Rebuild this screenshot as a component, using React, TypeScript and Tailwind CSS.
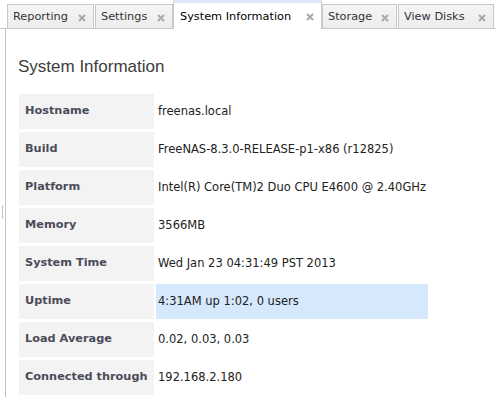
import React from 'react';

const tabs = [
  { label: 'Reporting', cls: 'w-[87px] mr-[1px]' },
  { label: 'Settings', cls: 'w-[78px]' },
  { label: 'System Information', cls: 'w-[149px]', active: true },
  { label: 'Storage', cls: 'w-[75px] mr-[1px]' },
  { label: 'View Disks', cls: 'w-[96px]' },
];

const rows: [string, string][] = [
  ['Hostname', 'freenas.local'],
  ['Build', 'FreeNAS-8.3.0-RELEASE-p1-x86 (r12825)'],
  ['Platform', 'Intel(R) Core(TM)2 Duo CPU E4600 @ 2.40GHz'],
  ['Memory', '3566MB'],
  ['System Time', 'Wed Jan 23 04:31:49 PST 2013'],
  ['Uptime', '4:31AM up 1:02, 0 users'],
  ['Load Average', '0.02, 0.03, 0.03'],
  ['Connected through', '192.168.2.180'],
];

function CloseX() {
  return (
    <svg width="8" height="8" viewBox="0 0 8 8" className="shrink-0">
      <path d="M1 1 L7 7 M7 1 L1 7" stroke="#a9a9a9" strokeWidth="2" />
    </svg>
  );
}

export default function App() {
  return (
    <div className="w-[496px] h-[397px] bg-white overflow-hidden relative font-['DejaVu_Sans',sans-serif]">
      {/* splitter grip */}
      <div className="absolute left-[2px] top-[205px] w-px h-[14px] bg-[#c8c8c8]" />

      {/* Tab strip */}
      <div className="flex items-end h-[29px] pl-[7px] border-b border-[#c9c9c9]">
        {tabs.map((t) =>
          t.active ? (
            <div
              key={t.label}
              className={`${t.cls} h-[29px] -mb-px bg-white border-x border-[#c9c9c9] border-t-[3px] border-t-[#dbe9f8] flex items-center justify-between pl-[6px] pr-[7px] pt-[2px] text-[11.3px] text-black`}
            >
              <span>{t.label}</span>
              <CloseX />
            </div>
          ) : (
            <div
              key={t.label}
              className={`${t.cls} h-[24px] bg-gradient-to-b from-[#f5f5f5] to-[#ececec] border border-b-0 border-[#c9c9c9] flex items-center justify-between pl-[5px] pr-[7px] pt-[2px] text-[11.3px] text-[#333]`}
            >
              <span>{t.label}</span>
              <CloseX />
            </div>
          )
        )}
      </div>

      {/* Content pane */}
      <div className="ml-[5px] border-l border-[#c3c3c3] h-full pl-[12px] pt-[28px]">
        <h2 className="font-['Liberation_Sans',Arial,sans-serif] text-[17px] text-[#3d3d3d] leading-[20px]">
          System Information
        </h2>
        <table className="mt-[14px] border-separate border-spacing-y-[3px] border-spacing-x-[2px] -ml-[1px]">
          <tbody>
            {rows.map(([k, v]) => (
              <tr key={k} className="h-[35px]">
                <td className="w-[135px] bg-[#f3f3f3] pl-[6px] text-[11.3px] font-bold text-[#4b4c5a] align-middle whitespace-nowrap">
                  {k}
                </td>
                <td
                  className={`pl-[2px] pr-[2px] text-[11.5px] text-[#222] align-middle whitespace-nowrap ${
                    k === 'Uptime' ? 'bg-[#d6e8fb]' : ''
                  }`}
                >
                  {v}
                </td>
              </tr>
            ))}
          </tbody>
        </table>
      </div>
    </div>
  );
}
